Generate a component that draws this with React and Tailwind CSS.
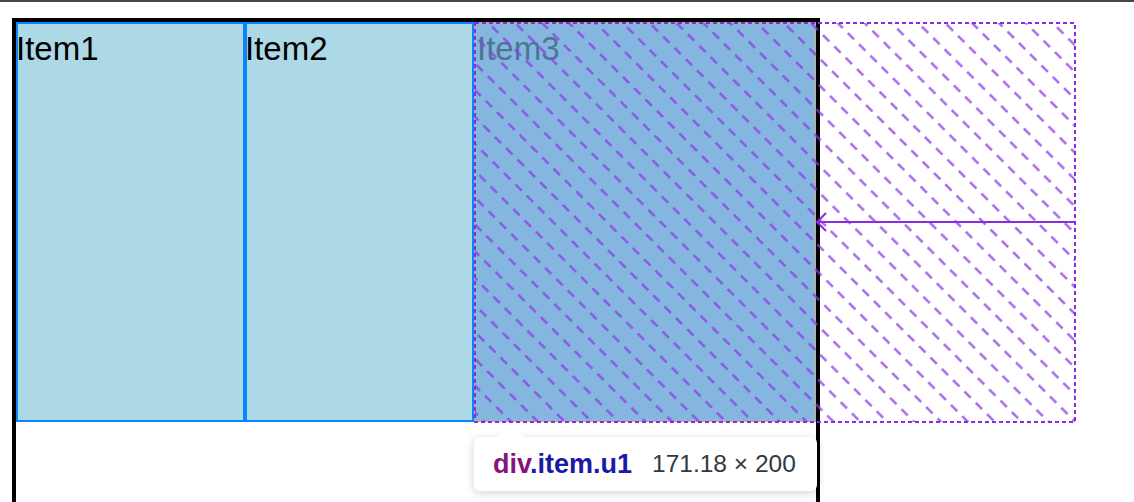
import React from "react";

const items = [
  { label: "Item1", w: "w-[229px]" },
  { label: "Item2", w: "w-[229px]" },
];

const App = () => {
  return (
    <div
      className="relative h-[502px] overflow-hidden bg-white"
      style={{ fontFamily: '"Liberation Sans", Arial, sans-serif' }}
    >
      {/* top edge of the window */}
      <div className="h-[2px] bg-[#464646]" />

      {/* flex container */}
      <div className="ml-3 mt-4 flex h-[540px] w-[808px] items-start border-4 border-black">
        {items.map((it) => (
          <div
            key={it.label}
            className={`${it.w} h-[400px] shrink-0 border-2 border-[#0a84ff] bg-[#add8e6] text-[33px] leading-[49px] text-black`}
          >
            <span className="-ml-[2px]">{it.label}</span>
          </div>
        ))}
        <div className="h-[400px] w-[342px] shrink-0 border-2 border-[#a9b1b1] bg-[#84b6df] text-[33px] leading-[49px] text-[#4d7594]">
          <span className="ml-[1px]">Item3</span>
        </div>
      </div>

      {/* devtools overlay: flex shrink area */}
      <svg
        className="pointer-events-none absolute left-[474px] top-[22px]"
        width="602"
        height="401"
        viewBox="0 0 602 401"
      >
        <defs>
          <pattern
            id="hatch"
            width="19"
            height="16"
            patternUnits="userSpaceOnUse"
            patternTransform="rotate(-45)"
          >
            <line x1="9.5" y1="0" x2="9.5" y2="9" stroke="#8b3ae6" strokeOpacity="0.85" strokeWidth="2.2" />
          </pattern>
        </defs>
        <rect x="1" y="1" width="600" height="399" fill="url(#hatch)" />
        <rect
          x="1"
          y="1"
          width="600"
          height="399"
          fill="none"
          stroke="#8a2be2"
          strokeWidth="2"
          strokeDasharray="4 3"
        />
        <line x1="600" y1="200" x2="343" y2="200" stroke="#8a2be2" strokeWidth="2" />
        <polyline points="352,191 343,200 352,209" fill="none" stroke="#8a2be2" strokeWidth="2" />
      </svg>

      {/* tooltip */}
      <div className="absolute left-[474px] top-[437px] flex h-[54px] w-[343px] items-center rounded-md bg-white pl-[19px] shadow-[0_2px_10px_rgba(0,0,0,0.18)]">
        <div className="absolute -top-[13px] left-[23px] h-0 w-0 border-b-[13px] border-l-[13px] border-r-[13px] border-b-white border-l-transparent border-r-transparent" />
        <span className="text-[27px] font-bold leading-none">
          <span className="text-[#881280]">div</span>
          <span className="text-[#1a1aa6]">.item.u1</span>
        </span>
        <span className="ml-[20px] text-[24.5px] leading-none text-[#303942]">171.18 × 200</span>
      </div>
    </div>
  );
};

export default App;
